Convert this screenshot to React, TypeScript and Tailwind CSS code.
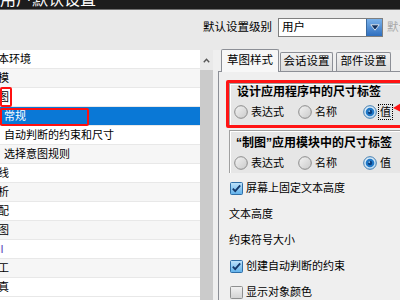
import React from "react"

const rows = [
  { label: "基本环境", top: true },
  { label: "建模", top: true },
  { label: "草图", top: true, mark: true },
  { label: "常规", selected: true },
  { label: "自动判断的约束和尺寸" },
  { label: "选择意图规则" },
  { label: "曲线", top: true },
  { label: "分析", top: true },
  { label: "装配", top: true },
  { label: "制图", top: true },
  { label: "PMI", top: true, pmi: true },
  { label: "加工", top: true },
  { label: "仿真", top: true },
]

function Radio({ on }: { on?: boolean }) {
  return (
    <svg width="14" height="14" viewBox="0 0 14 14" className="shrink-0">
      <defs>
        <linearGradient id={on ? "rg-on" : "rg-off"} x1="0" y1="0" x2="1" y2="1">
          <stop offset="0" stopColor={on ? "#e6f2fb" : "#f4f4f4"} />
          <stop offset="1" stopColor={on ? "#b9d8f0" : "#c9c9c9"} />
        </linearGradient>
      </defs>
      <circle cx="7" cy="7" r="6.3" fill={`url(#${on ? "rg-on" : "rg-off"})`} stroke={on ? "#3d7bb0" : "#8b8b8b"} strokeWidth="1" />
      {on && (
        <>
          <circle cx="7" cy="7" r="4.3" fill="#1f78c8" />
          <circle cx="7" cy="7" r="2.2" fill="#0c3f7e" />
          <circle cx="6.2" cy="6.1" r="0.9" fill="#8fd0ff" />
        </>
      )}
    </svg>
  )
}

function Check({ on }: { on?: boolean }) {
  return (
    <svg width="13" height="13" viewBox="0 0 13 13" className="shrink-0">
      <defs>
        <linearGradient id={on ? "cg-on" : "cg-off"} x1="0" y1="0" x2="0" y2="1">
          <stop offset="0" stopColor={on ? "#bfe3fb" : "#f2f2f2"} />
          <stop offset="1" stopColor={on ? "#5fb0ea" : "#d2d2d2"} />
        </linearGradient>
      </defs>
      <rect x="0.5" y="0.5" width="12" height="12" rx="1" fill={`url(#${on ? "cg-on" : "cg-off"})`} stroke={on ? "#2f6fa8" : "#8e8f8f"} />
      {on && <path d="M2.8 6.6 L5.2 9.2 L10.2 3.4" fill="none" stroke="#14386b" strokeWidth="1.8" />}
    </svg>
  )
}

function RadioRow({ focus }: { focus?: boolean }) {
  return (
    <div className="flex items-center h-[14px] text-[11px] leading-[14px] text-black">
      <div className="flex items-center w-[64px] gap-[3px]">
        <Radio />
        <span>表达式</span>
      </div>
      <div className="flex items-center w-[65px] gap-[3px]">
        <Radio />
        <span>名称</span>
      </div>
      <div className="flex items-center gap-[2px]">
        <Radio on />
        <span className={focus ? "outline-1 outline-dotted outline-black px-[1px]" : "px-[1px]"}>值</span>
      </div>
    </div>
  )
}

export default function App() {
  return (
    <div className="w-[400px] h-[300px] overflow-hidden bg-[#efefef] font-['Liberation_Sans','Noto_Sans_CJK_SC',sans-serif] text-black relative">
      {/* title bar */}
      <div className="h-[10px] bg-[#1d1d1d] border-b border-[#707070] overflow-hidden">
        <div className="-mt-[8px] text-[16px] leading-[16px] text-white whitespace-nowrap">用户默认设置</div>
      </div>

      {/* header */}
      <div className="h-[40px] bg-[#e9e9e9] flex items-start pt-[8px] pl-[203px] whitespace-nowrap">
        <span className="text-[11.5px] leading-[19px]">默认设置级别</span>
        <div className="ml-[6px] w-[105px] h-[19px] bg-white border border-[#7f7f7f] flex items-center shrink-0">
          <span className="pl-[3px] text-[11.5px] flex-1">用户</span>
          <div className="w-[16px] h-[17px] bg-gradient-to-b from-[#79b1ea] to-[#2f6fbe] border-l border-[#3a6aa0] flex items-center justify-center">
            <svg width="10" height="7" viewBox="0 0 10 7">
              <path d="M0.8 0.8 H9.2 L5 6.2 Z" fill="#10305e" stroke="#ffffff" strokeWidth="0.8" />
            </svg>
          </div>
        </div>
        <span className="ml-[4px] text-[11.5px] leading-[19px] text-[#a8a8a8]">默认</span>
      </div>

      {/* body */}
      <div className="flex h-[250px]">
        {/* tree list */}
        <div className="w-[200px] bg-white overflow-hidden shrink-0">
          {rows.map((r, i) => (
            <div
              key={i}
              className={`relative h-[19px] border-b border-[#e8e8e8] flex items-center text-[11px] whitespace-nowrap ${
                r.selected ? "bg-[#0a78d6] text-white" : i % 2 ? "bg-[#f6f6f6]" : "bg-white"
              }`}
            >
              <span className={`${r.pmi ? "-ml-[16px] text-[#5a46b8]" : r.top ? "-ml-[13px]" : "ml-[4px]"}`}>{r.label}</span>
              {r.mark && <div className="absolute left-0 -top-px w-[12px] h-[20px] border-2 border-[#ff1010] rounded-[2px]" />}
              {r.selected && <div className="absolute left-0 top-px w-[89px] h-[18px] border-2 border-[#ff1010] rounded-[2px]" />}
            </div>
          ))}
        </div>

        {/* scrollbar */}
        <div className="w-[13px] flex flex-col shrink-0">
          <div className="h-[20px] bg-[#e9e9e9] flex items-center justify-center">
            <svg width="7" height="5" viewBox="0 0 7 5">
              <path d="M0.8 4.2 L3.5 1.3 L6.2 4.2" fill="none" stroke="#555" strokeWidth="1.4" />
            </svg>
          </div>
          <div className="flex-1 bg-[#cbcbcb]" />
        </div>

        {/* settings panel */}
        <div className="flex-1 flex flex-col">
          <div className="h-[21px] flex items-end pl-[8px] text-[11.5px] whitespace-nowrap">
            <div className="relative z-10 -mb-px w-[58px] h-[23px] bg-[#f7f7f7] border border-b-0 border-[#8c8f96] rounded-t-[2px] flex items-center justify-center">
              草图样式
            </div>
            <div className="ml-px w-[53px] h-[19px] bg-gradient-to-b from-[#f2f2f2] to-[#dcdcdc] border border-b-0 border-[#8c8f96] rounded-t-[2px] flex items-center justify-center">
              会话设置
            </div>
            <div className="ml-[3px] w-[55px] h-[19px] bg-gradient-to-b from-[#f2f2f2] to-[#dcdcdc] border border-b-0 border-[#8c8f96] rounded-t-[2px] flex items-center justify-center">
              部件设置
            </div>
          </div>

          <div className="ml-[5px] flex-1 border-l border-t border-[#8c8f96] bg-[#efefef]">
            <div className="ml-[7px] mt-[8px] w-[200px] border-[3px] border-[#ff1414] rounded-[2px]">
              <div className="h-[42px] bg-[#e6e6e6] border-t border-l border-[#a0a0a0] shadow-[inset_1px_1px_0_#ffffff] pl-[4px]">
                <div className="pt-[1px] pl-[3px] text-[12px] leading-[14px] font-bold whitespace-nowrap">设计应用程序中的尺寸标签</div>
                <div className="mt-[6px]">
                  <RadioRow focus />
                </div>
              </div>
            </div>

            <div className="ml-[10px] mt-[2px] h-[43px] bg-[#e6e6e6] border-t border-l border-[#a0a0a0] shadow-[inset_1px_1px_0_#ffffff] pl-[4px]">
              <div className="pt-[5px] pl-[2px] text-[12px] leading-[14px] font-bold whitespace-nowrap">“制图”应用模块中的尺寸标签</div>
              <div className="mt-[6px]">
                <RadioRow />
              </div>
            </div>

            <div className="mt-[2px] pl-[11px] text-[11px] whitespace-nowrap">
              <div className="h-[26px] flex items-center gap-[3px]">
                <Check on />
                <span>屏幕上固定文本高度</span>
              </div>
              <div className="h-[26px] flex items-center -ml-px">文本高度</div>
              <div className="h-[26px] flex items-center -ml-px">约束符号大小</div>
              <div className="h-[26px] flex items-center gap-[3px]">
                <Check on />
                <span>创建自动判断的约束</span>
              </div>
              <div className="h-[26px] flex items-center gap-[3px]">
                <Check />
                <span>显示对象颜色</span>
              </div>
            </div>
          </div>
        </div>
      </div>

      {/* red arrow pointing at the value option */}
      <svg className="absolute left-[393px] top-[102px]" width="8" height="10" viewBox="0 0 8 10">
        <path d="M0 6 L8 1 L8 10 Z" fill="#ff1414" />
      </svg>
    </div>
  )
}
